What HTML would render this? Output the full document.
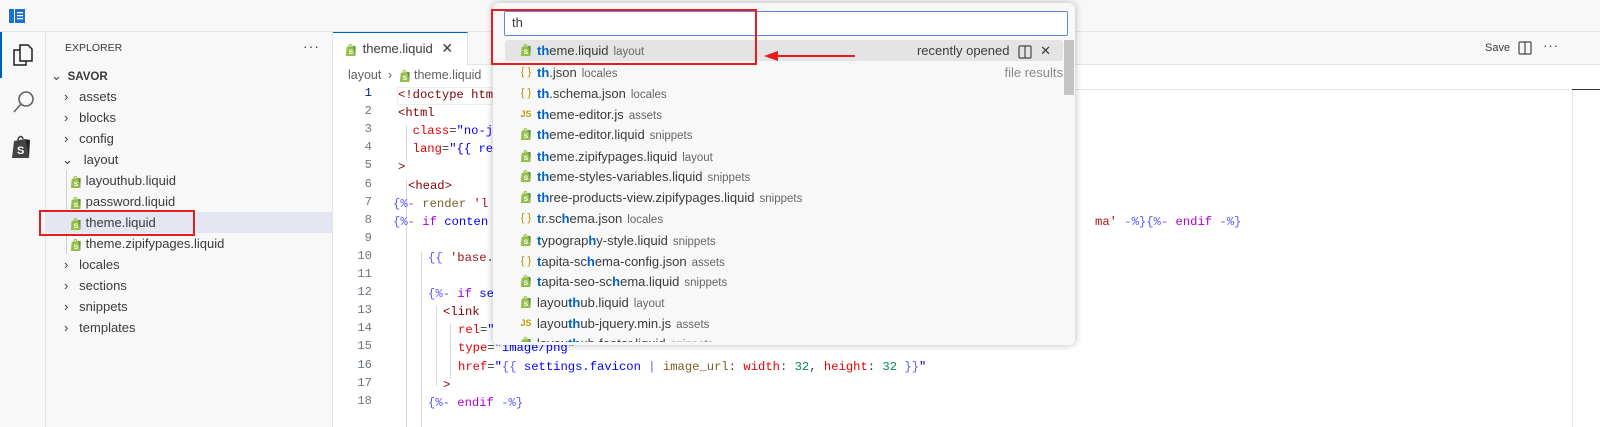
<!DOCTYPE html>
<html><head><meta charset="utf-8"><style>
*{margin:0;padding:0;box-sizing:border-box}
body{width:1600px;height:427px;overflow:hidden;background:#fff;font-family:"Liberation Sans",sans-serif;font-size:13px;color:#3b3b3b;position:relative}
.a{position:absolute;white-space:nowrap}
.code{font-family:"Liberation Mono",monospace;font-size:12.2px;position:absolute;white-space:pre;line-height:18px}
.ln{position:absolute;width:40px;text-align:right;font-family:"Liberation Mono",monospace;font-size:12.2px;color:#6e7681;left:332px}
.t{color:#800000}.at{color:#e50000}.s{color:#0000ff}.d{color:#5a5aff}.k{color:#af00db}.f{color:#795e26}.st{color:#a31515}
.sv{display:inline-block;vertical-align:middle}
.row{position:absolute;left:50px;height:21px;line-height:21px;font-size:13px;color:#3b3b3b}
.qi{position:absolute;left:505px;width:558px;height:21px;line-height:21px;font-size:13px;color:#3b3b3b}
.qi .ic{position:absolute;left:14px;top:0;width:14px;text-align:center;font-size:11px}
.qi .tx{position:absolute;left:32px}
.qi b{color:#0063c6;font-weight:bold}
.qi small{font-size:11.5px;color:#666;margin-left:5px}
.br{color:#b89500}.js{color:#b8a000;font-size:9px!important;font-weight:bold}
</style></head><body>
<svg width="0" height="0" style="position:absolute"><defs>
<symbol id="shop" viewBox="0 0 14 16"><path d="M2 4.5 L9.5 3 L12 15 L1 15 Z" fill="#95bf47"/><path d="M9.5 3 L12.5 3.8 L12 15 Z" fill="#5e8e3e"/><path d="M4.5 4 C4.5 1.5 7 0.5 8 3" stroke="#95bf47" fill="none" stroke-width="1.2"/><text x="4.2" y="12.5" font-size="8" font-weight="bold" fill="#fff" font-family="Liberation Sans">S</text></symbol>
</defs></svg>

<!-- title bar -->
<div class="a" style="left:0;top:0;width:1600px;height:32px;background:#f8f8f8;border-bottom:1px solid #e5e5e5"></div>
<svg class="a" style="left:9px;top:9px" width="16" height="14"><rect x="0" y="0" width="5" height="14" fill="#1a73c8"/><rect x="6" y="0" width="10" height="14" fill="#1a73c8"/><rect x="8" y="3" width="6" height="1.3" fill="#fff"/><rect x="8" y="6" width="6" height="1.3" fill="#fff"/><rect x="8" y="9" width="6" height="1.3" fill="#fff"/></svg>

<!-- activity bar -->
<div class="a" style="left:0;top:32px;width:46px;height:395px;background:#f8f8f8;border-right:1px solid #e5e5e5"></div>
<div class="a" style="left:0;top:32px;width:2px;height:46px;background:#005fb8"></div>
<svg class="a" style="left:12px;top:43px" width="22" height="24" fill="none" stroke="#1f1f1f" stroke-width="1.5"><path d="M8 2h8l4 4v12H8z"/><path d="M8 7H2v15h12v-4"/></svg>
<svg class="a" style="left:12px;top:90px" width="24" height="24" fill="none" stroke="#616161" stroke-width="1.6"><circle cx="14" cy="9" r="7"/><path d="M9 14L2 22"/></svg>
<svg class="a" style="left:11px;top:134px" width="22" height="26"><path d="M3 7L14 5L18 24L1 24Z" fill="#444"/><path d="M14 5L19 6L18 24Z" fill="#222"/><path d="M7 7C7 2 11 1 12 5" stroke="#444" fill="none" stroke-width="1.6"/><text x="6" y="20" font-size="11" font-weight="bold" fill="#f8f8f8" font-family="Liberation Sans">S</text></svg>

<!-- sidebar -->
<div class="a" style="left:46px;top:32px;width:287px;height:395px;background:#f8f8f8;border-right:1px solid #e5e5e5"></div>
<div class="a" style="left:65px;top:42px;font-size:10.5px;color:#3b3b3b">EXPLORER</div>
<div class="a" style="left:303px;top:38px;font-size:14px;color:#444;letter-spacing:1px">···</div>
<div class="row" style="top:65px;left:51px"><span style="display:inline-block;width:12px;color:#444">⌄</span> <b style="font-size:11.5px;font-weight:bold;margin-left:1px">SAVOR</b></div>
<div class="row" style="top:86px;left:64px">›&nbsp;&nbsp; assets</div>
<div class="row" style="top:107px;left:64px">›&nbsp;&nbsp; blocks</div>
<div class="row" style="top:128px;left:64px">›&nbsp;&nbsp; config</div>
<div class="row" style="top:149px;left:62px">⌄&nbsp;&nbsp; layout</div>
<div class="a" style="left:66px;top:170px;width:1px;height:84px;background:#d0d0d0"></div>
<div class="a" style="left:46px;top:212px;width:286px;height:21px;background:#e4e6f1"></div>
<div class="row" style="top:170px;left:70px"><svg class="sv" width="12" height="14"><use href="#shop"/></svg> layouthub.liquid</div>
<div class="row" style="top:191px;left:70px"><svg class="sv" width="12" height="14"><use href="#shop"/></svg> password.liquid</div>
<div class="row" style="top:212px;left:70px"><svg class="sv" width="12" height="14"><use href="#shop"/></svg> theme.liquid</div>
<div class="row" style="top:233px;left:70px"><svg class="sv" width="12" height="14"><use href="#shop"/></svg> theme.zipifypages.liquid</div>
<div class="row" style="top:254px;left:64px">›&nbsp;&nbsp; locales</div>
<div class="row" style="top:275px;left:64px">›&nbsp;&nbsp; sections</div>
<div class="row" style="top:296px;left:64px">›&nbsp;&nbsp; snippets</div>
<div class="row" style="top:317px;left:64px">›&nbsp;&nbsp; templates</div>
<div class="a" style="left:39px;top:210px;width:156px;height:26px;border:2px solid #e81c1c"></div>

<!-- tabs -->
<div class="a" style="left:333px;top:32px;width:1267px;height:33px;background:#f8f8f8;border-bottom:1px solid #e5e5e5"></div>
<div class="a" style="left:333px;top:32px;width:135px;height:34px;background:#fff;border-top:1px solid #005fb8;border-right:1px solid #e5e5e5"></div>
<div class="a" style="left:345px;top:40px"><svg class="sv" width="12" height="14"><use href="#shop"/></svg> <span style="margin-left:2px">theme.liquid</span> <span style="margin-left:5px;font-size:14px">✕</span></div>
<div class="a" style="left:1485px;top:42px;font-size:11px;color:#3b3b3b">Save</div>
<svg class="a" style="left:1518px;top:41px" width="14" height="14" fill="none" stroke="#444" stroke-width="1.2"><rect x="1" y="1" width="12" height="12" rx="1"/><path d="M7 1v12"/></svg>
<div class="a" style="left:1543px;top:38px;font-size:13px;color:#444;letter-spacing:1px">···</div>

<!-- breadcrumbs -->
<div class="a" style="left:348px;top:68px;color:#616161;font-size:12.5px">layout <span style="margin:0 3px">›</span> <svg class="sv" width="12" height="14"><use href="#shop"/></svg> theme.liquid</div>
<div class="a" style="left:1075px;top:89px;width:525px;height:1px;background:#e5e5e5"></div>
<div class="a" style="left:1572px;top:89px;width:1px;height:338px;background:#e5e5e5"></div>
<div class="a" style="left:1572px;top:89px;width:28px;height:1px;background:#333"></div>

<!-- code -->
<div class="a" style="left:397px;top:87px;width:100px;height:18px;border:1px solid #eee"></div>
<div class="ln" style="top:86px;color:#0b216f">1</div>
<div class="ln" style="top:104px">2</div><div class="ln" style="top:122px">3</div><div class="ln" style="top:140px">4</div><div class="ln" style="top:158px">5</div><div class="ln" style="top:177px">6</div><div class="ln" style="top:195px">7</div><div class="ln" style="top:213px">8</div><div class="ln" style="top:231px">9</div><div class="ln" style="top:249px">10</div><div class="ln" style="top:267px">11</div><div class="ln" style="top:285px">12</div><div class="ln" style="top:303px">13</div><div class="ln" style="top:321px">14</div><div class="ln" style="top:339px">15</div><div class="ln" style="top:358px">16</div><div class="ln" style="top:376px">17</div><div class="ln" style="top:394px">18</div>
<div class="a" style="left:406px;top:125px;width:1px;height:36px;background:#d8d8d8"></div>
<div class="a" style="left:406px;top:180px;width:1px;height:247px;background:#d8d8d8"></div>
<div class="a" style="left:421px;top:252px;width:1px;height:175px;background:#d8d8d8"></div>
<div class="a" style="left:436px;top:306px;width:1px;height:80px;background:#d8d8d8"></div>
<div class="a" style="left:450px;top:324px;width:1px;height:55px;background:#d8d8d8"></div>
<div class="code" style="left:398px;top:86px"><span class="t">&lt;!doctype html</span></div>
<div class="code" style="left:398px;top:104px"><span class="t">&lt;html</span></div>
<div class="code" style="left:398px;top:122px">  <span class="at">class</span>=<span class="s">"no-js</span></div>
<div class="code" style="left:398px;top:140px">  <span class="at">lang</span>=<span class="s">"{{ req</span></div>
<div class="code" style="left:398px;top:158px"><span class="t">&gt;</span></div>
<div class="code" style="left:408px;top:177px"><span class="t">&lt;head&gt;</span></div>
<div class="code" style="left:393px;top:195px"><span class="d">{%-</span> <span class="f">render</span> <span class="st">'l</span></div>
<div class="code" style="left:393px;top:213px"><span class="d">{%-</span> <span class="k">if</span> <span class="s">conten</span></div>
<div class="code" style="left:1095px;top:213px"><span class="st">ma'</span> <span class="d">-%}{%-</span> <span class="k">endif</span> <span class="d">-%}</span></div>
<div class="code" style="left:428px;top:249px"><span class="d">{{</span> <span class="st">'base.c</span></div>
<div class="code" style="left:428px;top:285px"><span class="d">{%-</span> <span class="k">if</span> <span class="s">set</span></div>
<div class="code" style="left:443px;top:303px"><span class="t">&lt;link</span></div>
<div class="code" style="left:458px;top:321px"><span class="at">rel</span>=<span class="s">"i</span></div>
<div class="code" style="left:458px;top:339px"><span class="at">type</span>=<span class="s">"image/png"</span></div>
<div class="code" style="left:458px;top:358px"><span class="at">href</span>=<span class="s">"</span><span class="d">{{</span> <span class="s">settings.favicon</span> <span class="d">|</span> <span class="f">image_url</span>: <span class="at">width</span>: <span style="color:#098658">32</span>, <span class="at">height</span>: <span style="color:#098658">32</span> <span class="d">}}</span><span class="s">"</span></div>
<div class="code" style="left:443px;top:376px"><span class="t">&gt;</span></div>
<div class="code" style="left:428px;top:394px"><span class="d">{%-</span> <span class="k">endif</span> <span class="d">-%}</span></div>

<!-- quick pick -->
<div class="a" style="left:493px;top:3px;width:582px;height:342px;background:#f8f8f8;border-radius:6px;box-shadow:0 0 8px rgba(0,0,0,.28)"></div>
<div class="a" style="left:504px;top:11px;width:564px;height:25px;background:#fff;border:1px solid #5b8ad6;border-radius:2px;padding:3px 7px;font-size:13px;color:#3b3b3b">th</div>
<div class="a" style="left:505px;top:40px;width:558px;height:21px;background:#e4e4e4;border-radius:3px"></div>
<div class="a" style="left:1064px;top:40px;width:10px;height:55px;background:#c4c4c4"></div>
<div style="position:absolute;left:493px;top:40px;width:582px;height:302px;overflow:hidden">
<div style="position:absolute;left:-493px;top:-40px">
<div class="qi" style="top:40px"><span class="ic"><svg class="sv" width="12" height="14"><use href="#shop"/></svg></span><span class="tx"><b>th</b>eme.liquid<small>layout</small></span><span class="a" style="right:12px;top:0">recently opened <svg class="sv" width="14" height="14" fill="none" stroke="#444" stroke-width="1.2" style="margin:0 8px 0 5px"><rect x="1" y="1" width="12" height="12" rx="1"/><path d="M7 1v12"/></svg>✕</span></div>
<div class="qi" style="top:62px"><span class="ic br">{ }</span><span class="tx"><b>th</b>.json<small>locales</small></span><span class="a" style="right:0;top:0;color:#8a8a8a">file results</span></div>
<div class="qi" style="top:83px"><span class="ic br">{ }</span><span class="tx"><b>th</b>.schema.json<small>locales</small></span></div>
<div class="qi" style="top:104px"><span class="ic js">JS</span><span class="tx"><b>th</b>eme-editor.js<small>assets</small></span></div>
<div class="qi" style="top:124px"><span class="ic"><svg class="sv" width="12" height="14"><use href="#shop"/></svg></span><span class="tx"><b>th</b>eme-editor.liquid<small>snippets</small></span></div>
<div class="qi" style="top:146px"><span class="ic"><svg class="sv" width="12" height="14"><use href="#shop"/></svg></span><span class="tx"><b>th</b>eme.zipifypages.liquid<small>layout</small></span></div>
<div class="qi" style="top:166px"><span class="ic"><svg class="sv" width="12" height="14"><use href="#shop"/></svg></span><span class="tx"><b>th</b>eme-styles-variables.liquid<small>snippets</small></span></div>
<div class="qi" style="top:187px"><span class="ic"><svg class="sv" width="12" height="14"><use href="#shop"/></svg></span><span class="tx"><b>th</b>ree-products-view.zipifypages.liquid<small>snippets</small></span></div>
<div class="qi" style="top:208px"><span class="ic br">{ }</span><span class="tx"><b>t</b>r.sc<b>h</b>ema.json<small>locales</small></span></div>
<div class="qi" style="top:230px"><span class="ic"><svg class="sv" width="12" height="14"><use href="#shop"/></svg></span><span class="tx"><b>t</b>ypograp<b>h</b>y-style.liquid<small>snippets</small></span></div>
<div class="qi" style="top:251px"><span class="ic br">{ }</span><span class="tx"><b>t</b>apita-sc<b>h</b>ema-config.json<small>assets</small></span></div>
<div class="qi" style="top:271px"><span class="ic"><svg class="sv" width="12" height="14"><use href="#shop"/></svg></span><span class="tx"><b>t</b>apita-seo-sc<b>h</b>ema.liquid<small>snippets</small></span></div>
<div class="qi" style="top:292px"><span class="ic"><svg class="sv" width="12" height="14"><use href="#shop"/></svg></span><span class="tx">layou<b>th</b>ub.liquid<small>layout</small></span></div>
<div class="qi" style="top:313px"><span class="ic js">JS</span><span class="tx">layou<b>th</b>ub-jquery.min.js<small>assets</small></span></div>
<div class="qi" style="top:333px"><span class="ic"><svg class="sv" width="12" height="14"><use href="#shop"/></svg></span><span class="tx">layou<b>th</b>ub-footer.liquid<small>snippets</small></span></div>
</div></div>

<!-- annotations -->
<div class="a" style="left:491px;top:9px;width:266px;height:56px;border:2px solid #e81c1c"></div>
<div class="a" style="left:775px;top:55px;width:80px;height:2px;background:#e81c1c"></div>
<svg class="a" style="left:764px;top:51px" width="14" height="10"><path d="M0 5L14 0L14 10Z" fill="#e81c1c"/></svg>
</body></html>
